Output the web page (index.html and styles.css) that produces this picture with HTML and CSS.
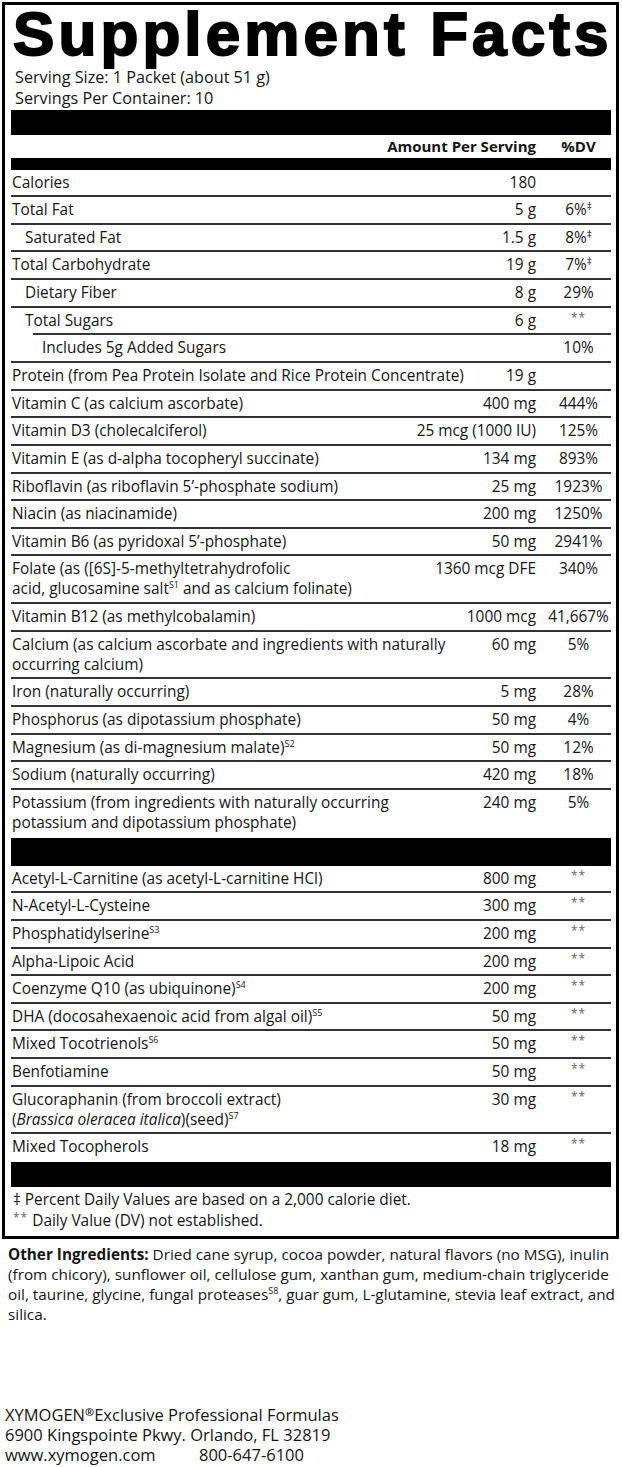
FILE: index.html
```html
<!DOCTYPE html>
<html>
<head>
<meta charset="utf-8">
<link rel="stylesheet" href="styles.css">
</head>
<body>
<div class="label">
  <h1 class="title">Supplement Facts</h1>
  <div class="serving">Serving Size: 1 Packet (about 51 g)<br>Servings Per Container: 10</div>
  <div class="bar bar-top"></div>
  <div class="row head"><span class="name"></span><span class="amt">Amount Per Serving</span><span class="dv">%DV</span></div>
  <div class="bar bar-mid"></div>

  <div class="row"><span class="name">Calories</span><span class="amt">180</span><span class="dv"></span></div>
  <div class="row"><span class="name">Total Fat</span><span class="amt">5 g</span><span class="dv">6%<sup class="dag">‡</sup></span></div>
  <div class="row"><span class="name in1">Saturated Fat</span><span class="amt">1.5 g</span><span class="dv">8%<sup class="dag">‡</sup></span></div>
  <div class="row"><span class="name">Total Carbohydrate</span><span class="amt">19 g</span><span class="dv">7%<sup class="dag">‡</sup></span></div>
  <div class="row"><span class="name in1">Dietary Fiber</span><span class="amt">8 g</span><span class="dv">29%</span></div>
  <div class="row line-in2"><span class="name in1">Total Sugars</span><span class="amt">6 g</span><span class="dv"><span class="na">**</span></span></div>
  <div class="row"><span class="name in2">Includes 5g Added Sugars</span><span class="amt"></span><span class="dv">10%</span></div>
  <div class="row"><span class="name nw">Protein (from Pea Protein Isolate and Rice Protein Concentrate)</span><span class="amt">19 g</span><span class="dv"></span></div>
  <div class="row"><span class="name">Vitamin C (as calcium ascorbate)</span><span class="amt">400 mg</span><span class="dv">444%</span></div>
  <div class="row"><span class="name">Vitamin D3 (cholecalciferol)</span><span class="amt">25 mcg (1000 IU)</span><span class="dv">125%</span></div>
  <div class="row"><span class="name">Vitamin E (as d-alpha tocopheryl succinate)</span><span class="amt">134 mg</span><span class="dv">893%</span></div>
  <div class="row"><span class="name">Riboflavin (as riboflavin 5’-phosphate sodium)</span><span class="amt">25 mg</span><span class="dv">1923%</span></div>
  <div class="row"><span class="name">Niacin (as niacinamide)</span><span class="amt">200 mg</span><span class="dv">1250%</span></div>
  <div class="row"><span class="name">Vitamin B6 (as pyridoxal 5’-phosphate)</span><span class="amt">50 mg</span><span class="dv">2941%</span></div>
  <div class="row"><span class="name">Folate (as ([6S]-5-methyltetrahydrofolic<br>acid, glucosamine salt<sup>S1</sup> and as calcium folinate)</span><span class="amt">1360 mcg DFE</span><span class="dv">340%</span></div>
  <div class="row"><span class="name">Vitamin B12 (as methylcobalamin)</span><span class="amt">1000 mcg</span><span class="dv">41,667%</span></div>
  <div class="row"><span class="name nw">Calcium (as calcium ascorbate and ingredients with naturally<br>occurring calcium)</span><span class="amt">60 mg</span><span class="dv">5%</span></div>
  <div class="row"><span class="name">Iron (naturally occurring)</span><span class="amt">5 mg</span><span class="dv">28%</span></div>
  <div class="row"><span class="name">Phosphorus (as dipotassium phosphate)</span><span class="amt">50 mg</span><span class="dv">4%</span></div>
  <div class="row"><span class="name">Magnesium (as di-magnesium malate)<sup>S2</sup></span><span class="amt">50 mg</span><span class="dv">12%</span></div>
  <div class="row"><span class="name">Sodium (naturally occurring)</span><span class="amt">420 mg</span><span class="dv">18%</span></div>
  <div class="row last"><span class="name">Potassium (from ingredients with naturally occurring<br>potassium and dipotassium phosphate)</span><span class="amt">240 mg</span><span class="dv">5%</span></div>

  <div class="bar bar-section"></div>

  <div class="row"><span class="name">Acetyl-L-Carnitine (as acetyl-L-carnitine HCl)</span><span class="amt">800 mg</span><span class="dv"><span class="na">**</span></span></div>
  <div class="row"><span class="name">N-Acetyl-L-Cysteine</span><span class="amt">300 mg</span><span class="dv"><span class="na">**</span></span></div>
  <div class="row"><span class="name">Phosphatidylserine<sup>S3</sup></span><span class="amt">200 mg</span><span class="dv"><span class="na">**</span></span></div>
  <div class="row"><span class="name">Alpha-Lipoic Acid</span><span class="amt">200 mg</span><span class="dv"><span class="na">**</span></span></div>
  <div class="row"><span class="name">Coenzyme Q10 (as ubiquinone)<sup>S4</sup></span><span class="amt">200 mg</span><span class="dv"><span class="na">**</span></span></div>
  <div class="row"><span class="name">DHA (docosahexaenoic acid from algal oil)<sup>S5</sup></span><span class="amt">50 mg</span><span class="dv"><span class="na">**</span></span></div>
  <div class="row"><span class="name">Mixed Tocotrienols<sup>S6</sup></span><span class="amt">50 mg</span><span class="dv"><span class="na">**</span></span></div>
  <div class="row"><span class="name">Benfotiamine</span><span class="amt">50 mg</span><span class="dv"><span class="na">**</span></span></div>
  <div class="row"><span class="name">Glucoraphanin (from broccoli extract)<br>(<i>Brassica oleracea italica</i>)(seed)<sup>S7</sup></span><span class="amt">30 mg</span><span class="dv"><span class="na">**</span></span></div>
  <div class="row last"><span class="name">Mixed Tocopherols</span><span class="amt">18 mg</span><span class="dv"><span class="na">**</span></span></div>

  <div class="bar bar-bottom"></div>

  <div class="notes">
    <div>‡ Percent Daily Values are based on a 2,000 calorie diet.</div>
    <div><span class="na">**</span> Daily Value (DV) not established.</div>
  </div>
</div>

<p class="other"><b>Other Ingredients:</b> Dried cane syrup, cocoa powder, natural flavors (no MSG), inulin<br>(from chicory), sunflower oil, cellulose gum, xanthan gum, medium-chain triglyceride<br>oil, taurine, glycine, fungal proteases<sup>S8</sup>, guar gum, L-glutamine, stevia leaf extract, and<br>silica.</p>

<div class="footer">
  <div>XYMOGEN<sup class="reg">®</sup>Exclusive Professional Formulas</div>
  <div>6900 Kingspointe Pkwy. Orlando, FL 32819</div>
  <div><span class="url">www.xymogen.com</span>800-647-6100</div>
</div>
</body>
</html>
```

FILE: styles.css
```css
body {
  margin: 0;
  background: #fff;
  color: #151515;
  font-family: "Open Sans", "DejaVu Sans Condensed", sans-serif;
  font-stretch: 90%;
  font-size: 15.4px;
}

.label {
  margin: 2px 0 0 2px;
  width: 617px;
  box-sizing: border-box;
  border: 3px solid #000;
  padding: 0 5px 0 6px;
}

.title {
  margin: 0;
  padding-left: 2px;
  font-family: "Liberation Sans", Arial, sans-serif;
  font-stretch: 100%;
  font-weight: 700;
  font-size: 62px;
  line-height: 57px;
  letter-spacing: 4.1px;
  -webkit-text-stroke: 2px #000;
  color: #000;
  white-space: nowrap;
}

.serving {
  margin-top: 4.5px;
  padding-left: 4px;
  font-size: 16.2px;
  line-height: 21px;
}

.bar {
  background: #000;
}
.bar-top { height: 25px; margin-top: 1px; }
.bar-mid { height: 12px; }
.bar-section { height: 28px; }
.bar-bottom { height: 25px; }

.row {
  display: grid;
  grid-template-columns: 1fr auto 65px;
  column-gap: 10px;
  line-height: 20px;
  padding: 3px 0 2.65px 1px;
  border-bottom: 2px solid #333;
}
.row.last {
  border-bottom: 0;
  padding-bottom: 4.65px;
}
.row.line-in2 {
  border-bottom: 0;
  padding-bottom: 4.65px;
  background: linear-gradient(#333, #333) no-repeat right bottom / calc(100% - 22px) 2px;
}

.row.head {
  border-bottom: 0;
  padding: 0;
  line-height: 23px;
  font-weight: 700;
  font-size: 15px;
}

.nw {
  white-space: nowrap;
}

.amt {
  text-align: right;
  white-space: nowrap;
}
.dv {
  text-align: center;
  white-space: nowrap;
}

.in1 { padding-left: 13px; }
.in2 { padding-left: 30px; }

sup {
  font-size: 9px;
  line-height: 0;
  vertical-align: 6px;
}
.dag {
  font-size: 10px;
  vertical-align: 5px;
}

.na {
  font-size: 12px;
  color: #666;
  letter-spacing: 1px;
  vertical-align: 4px;
  line-height: 0;
}

.notes {
  padding: 2px 0 5px 2px;
  line-height: 21px;
}

.other {
  margin: 5px 8px 0 8px;
  line-height: 20px;
  font-size: 15.3px;
  white-space: nowrap;
}

.footer {
  margin: 81px 0 0 5px;
  line-height: 20px;
  font-size: 16.5px;
}
.url {
  display: inline-block;
  width: 194px;
}
.reg {
  font-size: 11px;
  vertical-align: 5px;
  font-weight: 700;
}
```
